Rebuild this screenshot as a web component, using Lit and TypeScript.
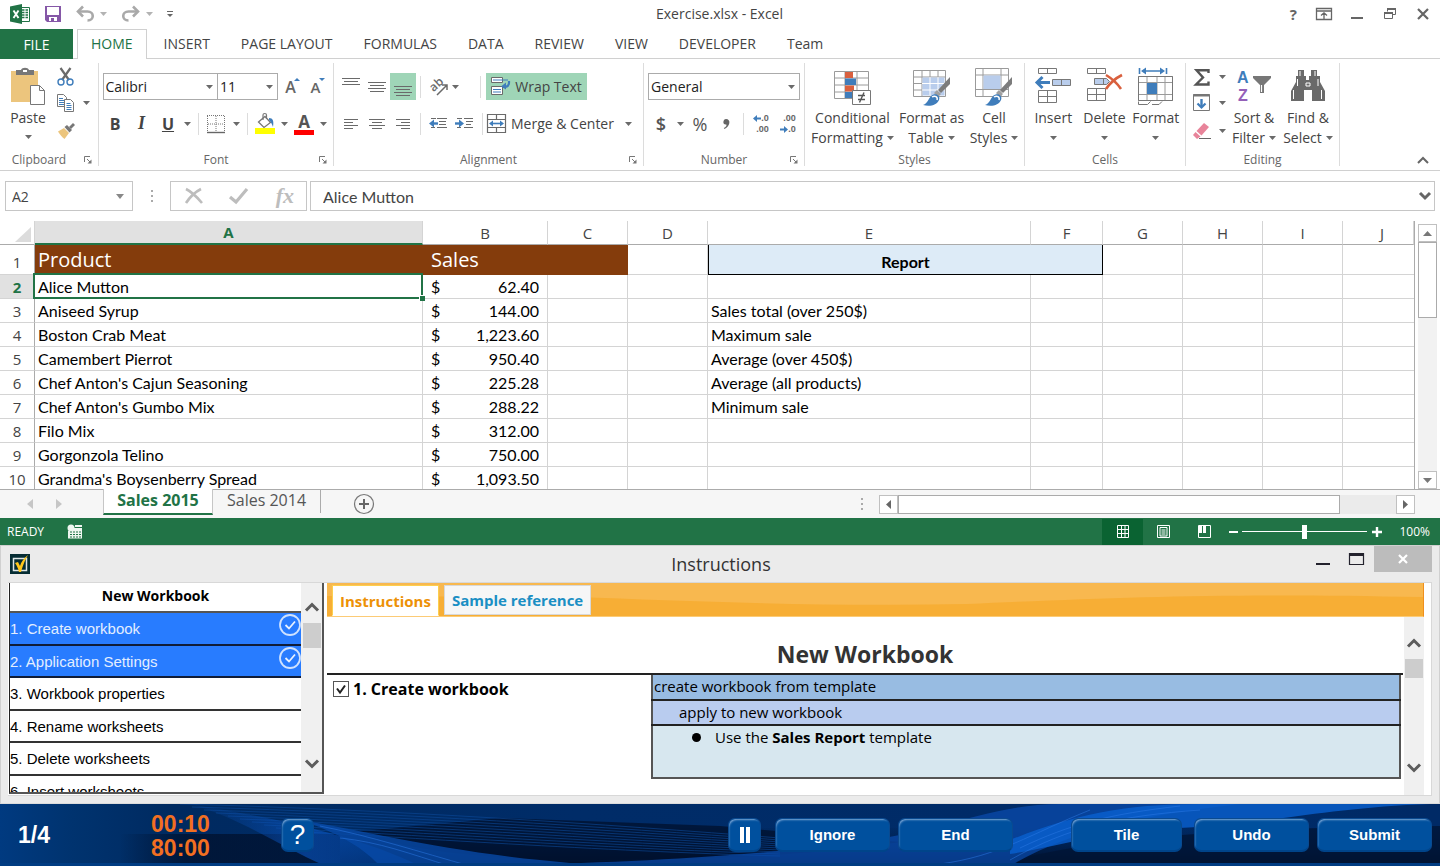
import { LitElement, html, svg, css, nothing } from "lit";
import { customElement } from "lit/decorators.js";
import { classMap } from "lit/directives/class-map.js";

const BLUE = "#3f7dbb";

const ic = (w: number, h: number, body: unknown) =>
  html`<svg width=${w} height=${h} viewBox="0 0 ${w} ${h}" fill="none" aria-hidden="true">${body}</svg>`;

const down = ic(7, 4, svg`<path d="M0 0h7L3.5 4z" fill="#6a6a6a"/>`);
const lines = (rows: number[][]) =>
  svg`${rows.map(([x, y, w]) => svg`<path d="M${x} ${y + 0.5}h${w}" stroke="#6a6a6a"/>`)}`;
const chevron = (up: boolean) =>
  ic(16, 12, svg`<path d=${up ? "M2 9.500 8 3.500l6 6" : "M2 2.500l6 6 6-6"} stroke="#5c5c5c" stroke-width="3"/>`);

const brush = svg`
  <path d="M37 9v7l-9 9-3-3z" fill="#7c7c7c"/>
  <path d="M24 22l4 4-3 3-4-4z" fill="#a0a0a0"/>
  <path d="M10 37c5-2 5-6 8-9 4-4 10-1 8 4-2 5-9 7-16 5z" fill="${BLUE}"/>
  <path d="M19 29c3-2 6 0 5 3" stroke="#fff" stroke-width="1.500"/>`;

const I = {
  excel: ic(20, 20, svg`
    <path d="M10 3.500h9.500v14H10" fill="#fff" stroke="#217346"/>
    <path d="M12 6h2.500M15.500 6H18M12 8.500h2.500M15.500 8.500H18M12 11h2.500M15.500 11H18M12 13.500h2.500M15.500 13.500H18" stroke="#217346" stroke-width="1.400"/>
    <path d="M0 2.500 12 0v20L0 17.500z" fill="#217346"/>
    <path d="M3.500 6.500l5 7.500M8.500 6.500l-5 7.500" stroke="#fff" stroke-width="1.900"/>`),
  save: ic(16, 16, svg`
    <path d="M0 0h16v16H2l-2-2z" fill="#8557a7"/><path d="M2 1h12v8H2z" fill="#fff"/>
    <path d="M4 11h8v4H4z" fill="#fff"/><path d="M6 12h3v3H6z" fill="#8557a7"/>`),
  undo: ic(18, 16, svg`
    <path d="M2 5.500h9.500c7 0 7 9 0 9" stroke="#a9a9a9" stroke-width="2.600"/>
    <path d="M7 .5 2 5.500l5 5" stroke="#a9a9a9" stroke-width="2.600"/>`),
  redo: ic(18, 16, svg`
    <path d="M16 5.500H6.500c-7 0-7 9 0 9" stroke="#a9a9a9" stroke-width="2.600"/>
    <path d="M11 .5l5 5-5 5" stroke="#a9a9a9" stroke-width="2.600"/>`),
  more: ic(6, 6, svg`<path d="M0 .5h6" stroke="#666"/><path d="M0 3h6L3 6z" fill="#666"/>`),
  ribbonOpt: ic(16, 12, svg`
    <path d="M.5.5h15v11H.5zM.5 3h15M8 11V5M5 7.500 8 4.800l3 2.700" stroke="#666" stroke-width="1.300"/>`),
  min: ic(12, 12, svg`<path d="M0 10h12" stroke="#666" stroke-width="2"/>`),
  restore: ic(12, 12, svg`
    <path d="M3.500 3.500v-3h8v6h-3M.5 4.500h8v6h-8z" stroke="#666"/><path d="M3 1h9M0 5h9" stroke="#666" stroke-width="2"/>`),
  close: ic(12, 12, svg`<path d="M1 1l10 10M11 1 1 11" stroke="#666" stroke-width="2.200"/>`),
  paste: ic(36, 38, svg`
    <path d="M1 3h27v31H1z" fill="#ecc57d"/>
    <path d="M6 2h5c1-3 7-3 8 0h5v5H6z" fill="#777"/><path d="M13 2h4v2h-4z" fill="#fff"/>
    <path d="M20.500 17.500h9l5 5v14h-14z" fill="#fff" stroke="#777"/><path d="M29.500 17.500v5h5" stroke="#777"/>`),
  cut: ic(18, 18, svg`
    <path d="M3.500 0 12 12M13.500 0 5 12" stroke="#6a6a6a" stroke-width="2.200"/>
    <circle cx="4" cy="14" r="3" stroke="${BLUE}" stroke-width="1.400"/><circle cx="13" cy="14" r="3" stroke="${BLUE}" stroke-width="1.400"/>`),
  copy: ic(18, 18, svg`
    <path d="M.5.5h6l3 3v9h-9z" fill="#fff" stroke="#777"/>
    <path d="M2 4.500h4M2 6.500h5M2 8.500h5M2 10.500h5" stroke="${BLUE}"/>
    <path d="M7.500 5.500h6l3 3v9h-9z" fill="#fff" stroke="#777"/>
    <path d="M9.500 9.500h4M9.500 11.500h5M9.500 13.500h5M9.500 15.500h5" stroke="${BLUE}"/>`),
  painter: ic(18, 16, svg`
    <path d="M1 8.500 7 5l5 5-4.500 6C5 14 3 12 1 8.500z" fill="#ecc57d"/>
    <path d="M7.500 4 10 2l5 5-2.500 2.500z" fill="#777"/><path d="M12 4l4-4 2 2-4 4z" fill="#777"/>`),
  launcher: ic(8, 8, svg`<path d="M.5 6V.5H6" stroke="#777"/><path d="M3 3l4 4" stroke="#777"/><path d="M7.500 3.500v4h-4z" fill="#777"/>`),
  grow: ic(6, 3, svg`<path d="M0 3l3-3 3 3z" fill="${BLUE}"/>`),
  shrink: ic(6, 3, svg`<path d="M0 0l3 3 3-3z" fill="${BLUE}"/>`),
  borders: ic(18, 18, svg`
    <path d="M.5 1v16M17 .5H0M17.500 1v16M9 1v16M1 9h16" stroke="#777" stroke-dasharray="1 1"/>
    <path d="M0 17.500h18" stroke="#666" stroke-width="1.400"/>`),
  fill: ic(20, 21, svg`
    <path d="M0 15h20v6H0z" fill="#ffff00"/>
    <path d="M3.500 9 10 3.500l5.500 6L9 14.500z" fill="#fff" stroke="#777" stroke-width="1.300"/>
    <path d="M8 7V2c0-2 3.500-2 3.500 0v4" stroke="#777" stroke-width="1.200"/>
    <path d="M14 5c4 0 5 3 4 9-1-3-2-5-4-7z" fill="${BLUE}"/>`),
  fontColor: ic(20, 5, svg`<path d="M0 0h20v5H0z" fill="#ff0000"/>`),
  top: ic(18, 18, lines([[0, 0, 18], [2, 3, 14], [0, 6, 18]])),
  middle: ic(18, 18, lines([[0, 4, 18], [2, 7, 14], [0, 10, 18], [2, 13, 14]])),
  bottom: ic(18, 18, lines([[0, 8, 18], [2, 11, 14], [0, 14, 18], [2, 17, 14]])),
  left: ic(14, 12, lines([[0, 1, 14], [0, 4, 9], [0, 7, 14], [0, 10, 9]])),
  center: ic(16, 12, lines([[0, 1, 16], [3, 4, 10], [0, 7, 16], [3, 10, 10]])),
  right: ic(14, 12, lines([[0, 1, 14], [5, 4, 9], [0, 7, 14], [5, 10, 9]])),
  orient: ic(22, 20, svg`
    <text x="3" y="12" transform="rotate(-42 9 9)" font-family="Open Sans, sans-serif" font-size="12" font-weight="600" fill="#6a6a6a">ab</text>
    <path d="M10 18 20 8M15 8h5v5" stroke="#6a6a6a" stroke-width="1.500"/>`),
  wrap: ic(19, 19, svg`
    <path d="M.5.5h11v5H.5zM.5 9.500h11v8H.5z" fill="#fff" stroke="#6a6a6a"/>
    <path d="M2 3h15M2 12.500h8M2 15h8" stroke="${BLUE}"/><path d="M18 4v2c0 3-2 4-6 4" stroke="${BLUE}" stroke-width="2.200"/>
    <path d="M10 9.500l5-4v7z" fill="${BLUE}"/>`),
  merge: ic(19, 19, svg`
    <path d="M.5.5h18v18H.5zM.5 5.500h18M.5 13.500h18M9.500.5v5M9.500 13.500v5" fill="#fff" stroke="#6a6a6a" stroke-width="1.200"/>
    <path d="M4 9.500h11" stroke="${BLUE}" stroke-width="1.600"/><path d="M2 9.500 6 6.500v6zM17 9.500l-4-3v6z" fill="${BLUE}"/>`),
  outdent: ic(18, 13, svg`${lines([[8, 1, 10], [10, 4, 7], [10, 7, 7], [2, 10, 4], [8, 10, 10], [2, 1, 5]])}
    <path d="M3 6.500h6" stroke="${BLUE}" stroke-width="2.400"/><path d="M0 6.500 5 2.500v8z" fill="${BLUE}"/>`),
  indent: ic(18, 13, svg`${lines([[9, 1, 9], [11, 4, 7], [11, 7, 5], [2, 10, 4], [9, 10, 9], [2, 1, 5]])}
    <path d="M0 6.500h6" stroke="${BLUE}" stroke-width="2.400"/><path d="M9 6.500l-5-4v8z" fill="${BLUE}"/>`),
  arrL: ic(8, 7, svg`<path d="M2 3.500h6" stroke="${BLUE}" stroke-width="2"/><path d="M0 3.500 4 0v7z" fill="${BLUE}"/>`),
  arrR: ic(8, 7, svg`<path d="M0 3.500h6" stroke="${BLUE}" stroke-width="2"/><path d="M8 3.500 4 0v7z" fill="${BLUE}"/>`),
  comma: ic(7, 10, svg`<path d="M3 0c5 0 4.500 7-1.500 10l-.7-1C3 8 4 6.500 3.300 5.500-1 6 0 0 3 0z" fill="#666"/>`),
  cond: ic(38, 38, svg`
    <path d="M.5 3.500h34v27H.5zM.5 10h34M.5 17h34M.5 24h34M11 3.500v27M23 3.500v27" fill="#fff" stroke="#9a9a9a"/>
    <path d="M11 4h8v6h-8zM11 17.500h9v6h-9z" fill="#d9603e"/><path d="M11 10.500h11v6.500H11zM11 24h7v6h-7z" fill="${BLUE}"/>
    <path d="M18.500 22.500h18v14h-18z" fill="#fff" stroke="#777"/>
    <path d="M24 27.500h7M24 31.500h7M30 24.500l-4.500 10" stroke="#555" stroke-width="1.400"/>`),
  fmtTable: ic(38, 38, svg`
    <path d="M.5 2.500h32v26H.5zM.5 9h32M.5 15.500h32M.5 22h32M9 2.500v26M17 2.500v26M25 2.500v26" fill="#fff" stroke="#9a9a9a"/>
    <path d="M9.500 9.500h22v18h-22z" fill="#b9cdec"/><path d="M9 15.500h23M9 22h23M17 9v19M25 9v19" stroke="#fff"/>${brush}`),
  cellStyles: ic(38, 38, svg`
    <path d="M.5.5h33v28H.5zM.5 7h33M.5 21.500h33M8 .5v28M26 .5v28" fill="#fff" stroke="#9a9a9a"/>
    <path d="M8.500 7.500h17v13.500h-17z" fill="#b9cdec"/>${brush}`),
  insert: ic(36, 38, svg`
    <path d="M3.500 .5h18v5h-18zM12.500 .5v5M3.500 22.500h18v12h-18zM3.500 28.500h18M12.500 22.500v12" fill="#fff" stroke="#777"/>
    <path d="M17.500 11.500h18v6h-18zM26.500 11.500v6" fill="#b9cdec" stroke="#777"/>
    <path d="M3 14.500h12" stroke="${BLUE}" stroke-width="3"/><path d="M7.500 9 2 14.500l5.500 5.500" stroke="${BLUE}" stroke-width="3"/>`),
  del: ic(36, 38, svg`
    <path d="M.5 .5h18v5H.5zM9.500 .5v5M.5 20.500h18v12H.5zM.5 26.500h18M9.500 20.500v12" fill="#fff" stroke="#777"/>
    <path d="M7.500 10.500h12l3 3-3 3h-12zM16.500 10.500v6" fill="#b9cdec" stroke="#777"/>
    <path d="M19 7c5 3 11 8 15 14M35 7c-6 3-12 8-16 14" stroke="#d9603e" stroke-width="2.600"/>`),
  format: ic(36, 38, svg`
    <path d="M1.500 0v6M28.500 0v6M6 3h18" stroke="${BLUE}" stroke-width="1.600"/><path d="M3 3l5-3.500v7zM27 3l-5-3.500v7z" fill="${BLUE}"/>
    <path d="M.5 8.500h34v24H.5zM.5 14.500h34M.5 26.500h34M9 8.500v24M19 8.500v24M27 8.500v24" fill="#fff" stroke="#9a9a9a"/>
    <path d="M.5 33.500v3h9l3-3M14 36.500h7l3-3" stroke="#777"/><path d="M9 15h10v11H9z" fill="${BLUE}"/><path d="M.5 8.500h34v24H.5z" stroke="#777"/>`),
  sum: ic(16, 17, svg`<path d="M14.500 4V1.200H2.500L9 8.500 2 15.500h12.500v-3" stroke="#555" stroke-width="2.400"/>`),
  fillDown: ic(18, 18, svg`<path d="M.5.5h16v16H.5z" fill="#fff" stroke="#777"/><path d="M0 1.500h17" stroke="#777" stroke-width="2"/>
    <path d="M8.500 5v8" stroke="${BLUE}" stroke-width="2.400"/><path d="M4.500 9.500l4 4 4-4" stroke="${BLUE}" stroke-width="2.200"/>`),
  eraser: ic(18, 18, svg`<path d="M3.500 9 11 1l5 4-7.500 8.500z" fill="#e8849a"/><path d="M2.500 10 0 13l4 4 3.500-2.500z" fill="#e8849a"/><path d="M6 16.500h12" stroke="#666"/>`),
  sort: ic(36, 38, svg`
    <text x="1" y="15" font-family="Liberation Sans, sans-serif" font-size="16" font-weight="700" fill="${BLUE}">A</text>
    <text x="2" y="33" font-family="Liberation Sans, sans-serif" font-size="16" font-weight="700" fill="#9460b8">Z</text>
    <path d="M17 8h18v2l-7 7v8h-4v-8l-7-7z" fill="#777"/><path d="M25.500 17v7" stroke="#fff" stroke-width="1.200"/>`),
  find: ic(36, 38, svg`
    <path d="M8 2h6v6h2v4h3V8h2V2h6v6h3v6l5 9v10H22V22h-8v11H1V23l5-9V8h2z" fill="#6a6a6a"/>
    <path d="M10 3v5M25 3v5M7.500 11v7M28 11v7M3.500 22v9M31.500 22v9" stroke="#fff"/><path d="M16 15h4v3h-4z" stroke="#fff"/>`),
  collapse: ic(12, 8, svg`<path d="M1 7l5-5 5 5" stroke="#666" stroke-width="2"/>`),
  cancel: ic(18, 16, svg`<path d="M1 1c6 3 11 8 16 14M16 1C10 4 5 9 1 15" stroke="#bdbdbd" stroke-width="2.600"/>`),
  enter: ic(20, 16, svg`<path d="M1 9l6 5L18 1" stroke="#bdbdbd" stroke-width="3.200"/>`),
  plus: ic(22, 22, svg`<circle cx="11" cy="11" r="9.500" stroke="#777" stroke-width="1.200"/><path d="M11 6v10M6 11h10" stroke="#666" stroke-width="2"/>`),
  macro: ic(16, 15, svg`<path d="M3 4h12v10.500H1V7h2z" fill="#eef6f0"/><circle cx="4" cy="4" r="3.500" fill="#eef6f0"/><path d="M8 1h7v2H8z" fill="#eef6f0"/>
    <path d="M3 8h11M3 10.500h11M3 13h11" stroke="#217346" stroke-dasharray="2 1"/>`),
  normal: ic(12, 13, svg`<path d="M.5.500h11v12H.5zM.5 4.500h11M.5 8.500h11M4.500.500v12M8 .500v12" stroke="#fff"/>`),
  layout: ic(13, 13, svg`<path d="M.5.500h12v12H.5zM3 2.500h7v8.500H3z" stroke="#fff"/><path d="M4.500 5h4M4.500 7h4M4.500 9h4" stroke="#fff"/>`),
  breaks: ic(13, 13, svg`<path d="M.5.500h12v12H.5z" stroke="#fff"/><path d="M1 0h3v8H1zM5 0h3v8H5z" fill="#fff"/>`),
  app: ic(20, 20, svg`<path d="M0 0h20v20H0z" fill="#062c33"/><path d="M3.500 4.500h13v12h-13z" stroke="#dfe6e6" stroke-width="1.500"/>
    <path d="M5 9l3-1 2 4c1-4 4-8 8-11-3 5-5 10-7 17H9c-1-4-2-6-4-9z" fill="#ffc61a"/>`),
  minDark: ic(14, 12, svg`<path d="M0 11h14" stroke="#23222d" stroke-width="2"/>`),
  maxDark: ic(15, 12, svg`<path d="M.5.500h14v11H.5z" stroke="#23222d" stroke-width="1.200"/><path d="M0 1.500h15" stroke="#23222d" stroke-width="3"/>`),
  closeWhite: ic(10, 10, svg`<path d="M1 1l8 8M9 1 1 9" stroke="#fff" stroke-width="2.200"/>`),
  tick: ic(22, 24, svg`<circle cx="11" cy="12" r="10" stroke="#cfe2ff" stroke-width="1.800"/><path d="M6.500 12l3.500 3.500 6-7" stroke="#e8f1ff" stroke-width="1.800"/>`),
};

const base = css`
  :host { display: block; box-sizing: border-box; font-family: "Open Sans", "Noto Sans", sans-serif; color: #444; }
  *, *::before, *::after { box-sizing: border-box; }
  button { font: inherit; color: inherit; background: none; border: 0; padding: 0; margin: 0; display: inline-flex; align-items: center; justify-content: center; }
  svg { display: block; flex: none; overflow: visible; }
`;

@customElement("xl-titlebar")
class XlTitlebar extends LitElement {
  static styles = [base, css`
    .bar { display: grid; grid-template-columns: 1fr auto 1fr; align-items: center; height: 29px; padding: 0 11px 2px 10px; }
    .quick, .window { display: flex; align-items: center; }
    .quick .gap { margin-left: 15px; }
    .quick .arrow { margin-left: 6px; opacity: 0.5; }
    .quick .wide { margin-left: 14px; }
    .window { justify-content: flex-end; gap: 21px; }
    .window .opt { margin: 0 -2px; }
    .help { font-size: 15px; font-weight: 700; color: #666; }
    .title { font-size: 14px; }
    .tabs { display: flex; gap: 3px; height: 30px; border-bottom: 1px solid #d0d0d0; }
    .tab, .file { font-size: 14px; height: 30px; padding: 0 13px 2px; border: 1px solid transparent; border-bottom: 0; }
    .file { width: 73px; background: #217346; color: #fff; margin-right: 1px; border: 0; padding: 0; }
    .current { color: #217346; background: #fff; border-color: #d0d0d0; }
  `];
  render() {
    const tabs = ["HOME", "INSERT", "PAGE LAYOUT", "FORMULAS", "DATA", "REVIEW", "VIEW", "DEVELOPER", "Team"];
    return html`
      <header class="bar">
        <div class="quick">
          ${I.excel}
          <button class="gap" aria-label="Save">${I.save}</button>
          <button class="gap" aria-label="Undo">${I.undo}</button><span class="arrow">${down}</span>
          <button class="gap" aria-label="Redo">${I.redo}</button><span class="arrow">${down}</span>
          <button class="wide" aria-label="Customize toolbar">${I.more}</button>
        </div>
        <div class="title">Exercise.xlsx - Excel</div>
        <div class="window">
          <button class="help" aria-label="Help">?</button>
          <button class="opt" aria-label="Ribbon options">${I.ribbonOpt}</button>
          <button aria-label="Minimize">${I.min}</button>
          <button aria-label="Restore">${I.restore}</button>
          <button aria-label="Close">${I.close}</button>
        </div>
      </header>
      <nav class="tabs">
        <button class="file">FILE</button>
        ${tabs.map((t, i) => html`<button class=${classMap({ tab: true, current: i === 0 })}>${t}</button>`)}
      </nav>`;
  }
}

@customElement("xl-ribbon")
class XlRibbon extends LitElement {
  static styles = [base, css`
    .ribbon { display: flex; height: 112px; padding-top: 4px; border-bottom: 1px solid #d0d0d0; }
    .group { display: flex; flex-direction: column; height: 103px; border-right: 1px solid #dcdcdc; }
    .body { flex: 1; display: flex; padding-top: 5px; }
    .rows { display: flex; flex-direction: column; }
    .name { display: grid; grid-template-columns: 20px 1fr 20px; height: 12px; font-size: 12px; line-height: 12px; color: #666; text-align: center; align-items: center; }
    .row { display: grid; height: 37px; align-items: center; justify-items: center; }
    .clipboard { width: 99px; }
    .clipboard .name { grid-template-columns: 1fr 20px; }
    .font { width: 235px; }
    .alignment { width: 310px; }
    .number { width: 161px; }
    .styles { width: 220px; }
    .cells { width: 161px; }
    .editing { width: 154px; }
    .clipboard .body { display: grid; grid-template-columns: 56px 20px 20px; }
    .small { display: grid; grid-template-rows: 18px 34px 22px; place-items: center; align-content: start; }
    .paste { flex-direction: column; justify-content: flex-start; gap: 3px; font-size: 14px; line-height: 18px; }
    .paste .drop { margin-top: 5px; }
    .font-a { grid-template-columns: 114px 61px 25px 25px; padding-left: 4px; }
    .font-b { grid-template-columns: 26px 27px 26px 12px 10px 26px 14px 9px 26px 12px 28px 10px; padding-left: 3px; }
    .align-a { grid-template-columns: 26px 26px 26px 9px 26px 8px 27px 101px; padding-left: 4px; }
    .align-b { grid-template-columns: 26px 26px 26px 9px 26px 26px 10px auto 30px; padding-left: 4px; justify-content: start; }
    .num-a { grid-template-columns: 152px; padding-left: 4px; }
    .num-b { grid-template-columns: 26px 12px 28px 24px 10px 26px 28px; padding-left: 4px; }
    .big { flex-direction: column; justify-content: flex-start; font-size: 14px; line-height: 20px; white-space: nowrap; gap: 2px; color: #444; }
    .big .line { display: flex; align-items: center; justify-content: center; gap: 4px; height: 20px; }
    .styles .body { display: grid; grid-template-columns: 95px 63px 62px; }
    .cells .body { display: grid; grid-template-columns: 1fr 50px 1fr; padding: 5px 3px 0 2px; }
    .editing .body { display: grid; grid-template-columns: 32px 8px 56px 52px; }
    .select { position: relative; }
    .select svg { position: absolute; right: 5px; top: 12px; pointer-events: none; }
    select { appearance: none; display: block; height: 27px; border: 1px solid #ababab; background: #fff; color: #222; font: 14px "Open Sans", "Noto Sans", sans-serif; padding: 0 0 0 2px; border-radius: 0; width: 100%; }
    .w-font { width: 115px; } .w-size { width: 61px; } .w-num { width: 152px; }
    .bar { width: 1px; height: 22px; background: #dcdcdc; }
    .bar.end { justify-self: end; margin-right: 5px; }
    .on { background: #9fd5b7; height: 27px; width: 100%; }
    .text { font-size: 14px; gap: 5px; white-space: nowrap; }
    .glyph { font-size: 16px; font-weight: 700; }
    .serif { font-family: "Liberation Serif", serif; font-style: italic; font-size: 18px; }
    .under { text-decoration: underline; }
    .letter { position: relative; width: 20px; height: 20px; font-size: 16px; font-weight: 600; color: #666; }
    .letter.smaller { font-size: 15px; }
    .letter svg { position: absolute; right: 1px; top: 1px; }
    .color { flex-direction: column; font-size: 17px; line-height: 17px; font-weight: 700; color: #555; }
    .money { font-size: 18px; color: #555; font-weight: 600; }
    .pct { font-size: 18px; color: #555; }
    .dec { display: grid; font: 700 9px/11px "Liberation Sans", sans-serif; color: #666; justify-items: end; }
    .dec span { display: flex; align-items: center; }
    .fold { flex: 1; display: flex; align-items: flex-end; justify-content: flex-end; padding: 0 11px 6px 0; }
  `];
  group(cls: string, label: string, launcher: boolean, body: unknown) {
    return html`<section class="group ${cls}">
      <div class="body">${body}</div>
      <div class="name">
        ${cls === "clipboard" ? nothing : html`<span></span>`}
        <span>${label}</span>
        ${launcher ? html`<button aria-label="${label} settings">${I.launcher}</button>` : html`<span></span>`}
      </div>
    </section>`;
  }
  big(icon: unknown, a: string, b = "") {
    return html`<button class="big">${icon}
      <span><span class="line">${a}</span><span class="line">${b}${down}</span></span></button>`;
  }
  render() {
    return html`<div class="ribbon">
      ${this.group("clipboard", "Clipboard", true, html`
        <button class="paste">${I.paste}<span>Paste</span><span class="drop">${down}</span></button>
        <div class="small">
          <button aria-label="Cut">${I.cut}</button><button aria-label="Copy">${I.copy}</button><button aria-label="Format painter">${I.painter}</button>
        </div>
        <div class="small"><span></span><button aria-label="Copy options">${down}</button></div>`)}
      ${this.group("font", "Font", true, html`<div class="rows">
        <div class="row font-a">
          <label class="select w-font"><select aria-label="Font"><option>Calibri</option></select>${down}</label>
          <label class="select w-size"><select aria-label="Font size"><option>11</option></select>${down}</label>
          <button class="letter" aria-label="Grow font">A${I.grow}</button>
          <button class="letter smaller" aria-label="Shrink font">A${I.shrink}</button>
        </div>
        <div class="row font-b">
          <button class="glyph">B</button><button class="glyph serif">I</button><button class="glyph under">U</button>
          <button aria-label="Underline options">${down}</button><span class="bar"></span>
          <button aria-label="Borders">${I.borders}</button><button aria-label="Border options">${down}</button><span class="bar"></span>
          <button aria-label="Fill color">${I.fill}</button><button aria-label="Fill options">${down}</button>
          <button class="color" aria-label="Font color">A${I.fontColor}</button><button aria-label="Font color options">${down}</button>
        </div></div>`)}
      ${this.group("alignment", "Alignment", true, html`<div class="rows">
        <div class="row align-a">
          <button aria-label="Top align">${I.top}</button><button aria-label="Middle align">${I.middle}</button>
          <button class="on" aria-label="Bottom align">${I.bottom}</button><span class="bar"></span>
          <button aria-label="Orientation">${I.orient}</button><button aria-label="Orientation options">${down}</button>
          <span class="bar end"></span><button class="on text">${I.wrap}Wrap Text</button>
        </div>
        <div class="row align-b">
          <button aria-label="Align left">${I.left}</button><button aria-label="Center">${I.center}</button>
          <button aria-label="Align right">${I.right}</button><span class="bar"></span>
          <button aria-label="Decrease indent">${I.outdent}</button><button aria-label="Increase indent">${I.indent}</button>
          <span class="bar"></span><button class="text">${I.merge}Merge &amp; Center</button>
          <button aria-label="Merge options">${down}</button>
        </div></div>`)}
      ${this.group("number", "Number", true, html`<div class="rows">
        <div class="row num-a"><label class="select w-num"><select aria-label="Number format"><option>General</option></select>${down}</label></div>
        <div class="row num-b">
          <button class="money">$</button><button aria-label="Currency options">${down}</button>
          <button class="pct">%</button><button aria-label="Comma style">${I.comma}</button><span class="bar"></span>
          <button class="dec" aria-label="Increase decimal"><span>${I.arrL}.0</span><span>.00</span></button>
          <button class="dec" aria-label="Decrease decimal"><span>.00</span><span>${I.arrR}.0</span></button>
        </div></div>`)}
      ${this.group("styles", "Styles", false, html`
        ${this.big(I.cond, "Conditional", "Formatting")}
        ${this.big(I.fmtTable, "Format as", "Table")}
        ${this.big(I.cellStyles, "Cell", "Styles")}`)}
      ${this.group("cells", "Cells", false, html`
        ${this.big(I.insert, "Insert")}${this.big(I.del, "Delete")}${this.big(I.format, "Format")}`)}
      ${this.group("editing", "Editing", false, html`
        <div class="small"><button aria-label="Sum">${I.sum}</button><button aria-label="Fill">${I.fillDown}</button><button aria-label="Clear">${I.eraser}</button></div>
        <div class="small"><button aria-label="Sum options">${down}</button><button aria-label="Fill options">${down}</button><button aria-label="Clear options">${down}</button></div>
        ${this.big(I.sort, "Sort &", "Filter")}
        ${this.big(I.find, "Find &", "Select")}`)}
      <div class="fold"><button aria-label="Collapse ribbon">${I.collapse}</button></div>
    </div>`;
  }
}

@customElement("xl-formula-bar")
class XlFormulaBar extends LitElement {
  static styles = [base, css`
    .bar { display: flex; align-items: center; padding: 0 5px; height: 50px; }
    .box { height: 30px; border: 1px solid #c6c6c6; display: flex; align-items: center; }
    .name { width: 128px; padding-right: 8px; }
    input { border: 0; outline: 0; padding: 0; background: none; font: 14px "Open Sans", "Noto Sans", sans-serif; color: #444; min-width: 0; flex: 1; }
    .name input { padding-left: 6px; }
    .dots { width: 37px; display: flex; justify-content: center; }
    .tools { width: 137px; justify-content: space-between; padding: 0 12px 0 14px; }
    .fx { font: italic bold 22px "Liberation Serif", serif; color: #bdbdbd; }
    .value { flex: 1; margin-left: 3px; padding: 0 3px 0 12px; }
    .value input { font-family: Lato, sans-serif; font-size: 16px; }
  `];
  render() {
    return html`<div class="bar">
      <div class="box name"><input aria-label="Name box" value="A2" />${ic(8, 5, svg`<path d="M0 0h8L4 5z" fill="#888"/>`)}</div>
      <div class="dots">${ic(2, 12, svg`<path d="M0 0h2v2H0zM0 5h2v2H0zM0 10h2v2H0z" fill="#aaa"/>`)}</div>
      <div class="box tools"><button aria-label="Cancel">${I.cancel}</button><button aria-label="Enter">${I.enter}</button><button class="fx">fx</button></div>
      <div class="box value"><input aria-label="Formula" value="Alice Mutton" /><button aria-label="Expand formula bar">${ic(12, 8, svg`<path d="M1 1l5 5 5-5" stroke="#666" stroke-width="3"/>`)}</button></div>
    </div>`;
  }
}

const products: [string, string][] = [
  ["Alice Mutton", "62.40"], ["Aniseed Syrup", "144.00"], ["Boston Crab Meat", "1,223.60"],
  ["Camembert Pierrot", "950.40"], ["Chef Anton's Cajun Seasoning", "225.28"], ["Chef Anton's Gumbo Mix", "288.22"],
  ["Filo Mix", "312.00"], ["Gorgonzola Telino", "750.00"], ["Grandma's Boysenberry Spread", "1,093.50"],
];
const report = ["", "Sales total (over 250$)", "Maximum sale", "Average (over 450$)", "Average (all products)", "Minimum sale", "", "", ""];

@customElement("xl-sheet")
class XlSheet extends LitElement {
  static styles = [base, css`
    :host { flex: 1; min-height: 0; display: flex; flex-direction: column; }
    .area { flex: 1; min-height: 0; display: grid; grid-template-columns: 1fr 25px; }
    .view { overflow: hidden; border-right: 1px solid #ababab; }
    table { width: 100%; table-layout: fixed; border-collapse: separate; border-spacing: 0; font: 16px Lato, sans-serif; color: #000; }
    .c-head { width: 35px; } .c-a { width: 388px; } .c-b { width: 125px; } .c-e { width: 323px; } .c-f { width: 72px; } .c-std { width: 80px; }
    th, td { padding: 0; white-space: nowrap; border-right: 1px solid #d4d4d4; border-bottom: 1px solid #d4d4d4; height: 24px; line-height: 22px; overflow: hidden; }
    thead th { font: 15px/22px "Open Sans", sans-serif; color: #444; border-bottom-color: #ababab; }
    thead th.sel { background: #e1e1e1; color: #217346; font-weight: 700; border-bottom: 2px solid #217346; }
    thead th:last-child { padding-left: 8px; }
    .corner svg { margin: 3px 0 0 15px; }
    tbody th { font: 15px/22px "Open Sans", sans-serif; color: #444; border-right-color: #ababab; }
    tbody th.sel { background: #e1e1e1; color: #217346; font-weight: 700; }
    .first td, .first th { height: 30px; padding-top: 4px; }
    td { padding: 0 3px; }
    td:last-child { border-right: 0; }
    .first .brown { background: #843c0c; color: #fff; font: 20px/24px "Open Sans", sans-serif; border-color: #843c0c; padding-top: 0; }
    .first .b { padding-left: 8px; }
    .report { background: #ddebf7; font-weight: 700; text-align: center; border: 1px solid #000; border-top: 0; }
    .active { position: relative; overflow: visible; }
    .active::after { content: ""; position: absolute; inset: -2px -1px -1px -2px; border: 2px solid #217346; pointer-events: none; }
    .active::before { content: ""; position: absolute; right: -3px; bottom: -3px; width: 6px; height: 6px; background: #217346; border: 1px solid #fff; border-width: 1px 0 0 1px; z-index: 1; }
    .money { display: flex; justify-content: space-between; padding: 0 5px; }
    .scroll { display: grid; grid-template-rows: 18px 76px 1fr 18px; width: 19px; margin: 3px 0 0 3px; background: #f2f2f2; }
    .scroll button, .thumb { border: 1px solid #c0c0c0; background: #fff; }
    .thumb { border-color: #ababab; }
    .foot { display: flex; align-items: center; height: 29px; background: #f6f6f6; border-top: 1px solid #ababab; padding-right: 25px; font-size: 16px; }
    .nav { display: flex; gap: 23px; width: 103px; padding-left: 27px; }
    .tab { align-self: flex-start; height: 25px; color: #555; line-height: 20px; padding-bottom: 3px; margin-top: -1px; }
    .tab.current { width: 110px; background: #fff; color: #217346; font-weight: 700; border: 1px solid #c6c6c6; border-top: 0; border-bottom: 2px solid #217346; height: 26px; }
    .tab.next { width: 108px; border-right: 1px solid #ababab; height: 24px; }
    .new { margin-left: 32px; }
    .dots { margin-left: auto; margin-right: 16px; }
    .hscroll { display: grid; grid-template-columns: 19px 442px 1fr 19px; width: 536px; height: 19px; background: #ebebeb; }
    .hscroll button, .hthumb { border: 1px solid #c0c0c0; background: #fff; }
    .hthumb { border-color: #ababab; }
  `];
  render() {
    const cols = ["A", "B", "C", "D", "E", "F", "G", "H", "I", "J"];
    return html`
      <div class="area">
        <div class="view"><table>
          <colgroup><col class="c-head" /><col class="c-a" /><col class="c-b" /><col class="c-std" /><col class="c-std" /><col class="c-e" /><col class="c-f" /><col class="c-std" /><col class="c-std" /><col class="c-std" /><col /></colgroup>
          <thead><tr><th class="corner">${ic(16, 15, svg`<path d="M16 0v15H0z" fill="#dcdcdc"/>`)}</th>
            ${cols.map((c, i) => html`<th class=${classMap({ sel: i === 0 })}>${c}</th>`)}</tr></thead>
          <tbody>
            <tr class="first"><th>1</th><td class="brown">Product</td><td class="brown b">Sales</td><td class="brown"></td><td></td>
              <td class="report" colspan="2">Report</td><td></td><td></td><td></td><td></td></tr>
            ${products.map(([name, price], i) => html`<tr>
              <th class=${classMap({ sel: i === 0 })}>${i + 2}</th>
              <td class=${classMap({ active: i === 0 })}>${name}</td>
              <td><span class="money"><span>$</span><span>${price}</span></span></td>
              <td></td><td></td><td>${report[i]}</td><td></td><td></td><td></td><td></td><td></td></tr>`)}
          </tbody>
        </table></div>
        <div class="scroll">
          <button aria-label="Scroll up">${ic(9, 5, svg`<path d="M4.500 0 9 5H0z" fill="#777"/>`)}</button>
          <span class="thumb"></span><span></span>
          <button aria-label="Scroll down">${ic(9, 5, svg`<path d="M0 0h9L4.500 5z" fill="#777"/>`)}</button>
        </div>
      </div>
      <div class="foot">
        <div class="nav"><button aria-label="Previous sheet">${ic(6, 10, svg`<path d="M6 0v10L0 5z" fill="#c6c6c6"/>`)}</button>
          <button aria-label="Next sheet">${ic(6, 10, svg`<path d="M0 0v10l6-5z" fill="#c6c6c6"/>`)}</button></div>
        <button class="tab current">Sales 2015</button>
        <button class="tab next">Sales 2014</button>
        <button class="new" aria-label="New sheet">${I.plus}</button>
        <span class="dots">${ic(2, 12, svg`<path d="M0 0h2v2H0zM0 5h2v2H0zM0 10h2v2H0z" fill="#aaa"/>`)}</span>
        <div class="hscroll">
          <button aria-label="Scroll left">${ic(5, 9, svg`<path d="M5 0v9L0 4.500z" fill="#666"/>`)}</button><span class="hthumb"></span><span></span>
          <button aria-label="Scroll right">${ic(5, 9, svg`<path d="M0 0v9l5-4.500z" fill="#666"/>`)}</button>
        </div>
      </div>`;
  }
}

@customElement("xl-status")
class XlStatus extends LitElement {
  static styles = [base, css`
    .bar { display: flex; align-items: center; height: 27px; background: #217346; color: #fff; font-size: 12px; padding: 0 10px 0 7px; }
    .rec { margin-left: 23px; }
    .views { display: flex; margin-left: auto; height: 26px; }
    .views button { width: 41px; }
    .views .on { background: #0a6332; }
    .zoom { display: flex; align-items: center; gap: 4px; margin-left: 4px; }
    .zoom input { appearance: none; width: 125px; height: 15px; margin: 0; background: linear-gradient(#fff, #fff) center / 100% 1px no-repeat; }
    .zoom input::-webkit-slider-thumb { appearance: none; width: 5px; height: 14px; background: #fff; }
    .pct { margin-left: 16px; }
  `];
  render() {
    return html`<footer class="bar">
      <span>READY</span><button class="rec" aria-label="Record macro">${I.macro}</button>
      <div class="views"><button class="on" aria-label="Normal view">${I.normal}</button><button aria-label="Page layout view">${I.layout}</button><button aria-label="Page break view">${I.breaks}</button></div>
      <div class="zoom"><button aria-label="Zoom out">${ic(9, 2, svg`<path d="M0 0h9v2H0z" fill="#fff"/>`)}</button>
        <input type="range" aria-label="Zoom" min="0" max="200" value="100" />
        <button aria-label="Zoom in">${ic(12, 12, svg`<path d="M6 1v10M1 6h10" stroke="#fff" stroke-width="2.400"/>`)}</button></div>
      <span class="pct">100%</span>
    </footer>`;
  }
}

@customElement("task-window")
class TaskWindow extends LitElement {
  static styles = [base, css`
    .win { background: #ebebeb; border: 1px solid #d0d0d0; border-bottom-color: #dcdcdc; height: 259px; padding: 0 7px 7px 7px; display: flex; flex-direction: column; }
    .head { display: grid; grid-template-columns: 1fr auto 1fr; height: 36px; align-items: center; font-size: 18px; color: #333; padding-left: 2px; }
    .controls { display: flex; justify-content: flex-end; align-self: start; align-items: center; gap: 19px; height: 26px; }
    .close { width: 58px; height: 26px; background: #bcbcbc; margin-left: -9px; }
    .main { flex: 1; min-height: 0; display: flex; background: #fff; border: 1px solid #d8d8d8; border-width: 1px 1px 1px 0; }
    .side { width: 315px; display: flex; border: 1px solid #222; border-top: 0; border-right: 2px solid #555; border-bottom: 2px solid #555; overflow: hidden; margin-left: 1px; margin-bottom: 1px; }
    .list { flex: 1; overflow: hidden; font: 15px "Liberation Sans", Arial, sans-serif; color: #000; }
    h2 { margin: 0; height: 30px; border-bottom: 2px solid #555; font: 700 14px/26px "Open Sans", sans-serif; text-align: center; color: #000; }
    ol { list-style: none; margin: 0; padding: 0; }
    li { display: flex; justify-content: space-between; height: 33px; line-height: 32px; border-bottom: 2px solid #333; }
    li:nth-child(even) { height: 32px; }
    li.done { background: #287cff; color: #e3eeff; border-bottom-color: #101c38; }
    .bar { width: 21px; background: #f0f0f0; display: grid; grid-template-rows: 40px 25px 1fr 34px; justify-items: center; }
    .bar .thumb, .docbar .thumb { width: 18px; background: #cdcdcd; }
    .up { align-self: end; margin-bottom: 10px; }
    .dn { align-self: start; }
    .doc { flex: 1; display: flex; flex-direction: column; margin: 0 7px 0 3px; min-width: 0; }
    .tabs { position: relative; display: flex; gap: 5px; height: 34px; padding: 2px 0 0 5px; background: #f7ae35; border-bottom: 1px solid #fccb76; border-right: 1px solid #ef8f1d; }
    .wave { position: absolute; inset: 0; width: 100%; height: 100%; }
    .tab { position: relative; height: 31px; background: #fff; border: 1px solid #fccf4f; border-bottom-color: #fff; font: 700 15px "Open Sans", sans-serif; color: #ed9106; padding: 0 7px; }
    .tab.other { color: #1b8fc4; background: #f6f6f6; border-color: #d8d8d8; height: 30px; }
    .scroller { flex: 1; display: flex; min-height: 0; }
    .page { flex: 1; min-width: 0; margin-right: 1px; overflow: hidden; }
    h1 { margin: 0; height: 58px; padding-top: 19px; text-align: center; font: 700 23px/36px "Open Sans", sans-serif; color: #333; border-bottom: 2px solid #222; }
    .task { display: flex; padding-right: 2px; }
    .step { width: 324px; display: flex; gap: 4px; padding-left: 6px; height: 28px; align-items: center; font: 700 16px "Open Sans", sans-serif; color: #000; }
    input { appearance: none; width: 16px; height: 16px; margin: 0; border: 1px solid #555; background: #fff; }
    .check { position: relative; display: flex; }
    .check svg { position: absolute; left: 2px; top: 2px; pointer-events: none; }
    .detail { flex: 1; border-collapse: collapse; border: 2px solid #555; border-top: 0; font: 15px "Open Sans", sans-serif; color: #000; }
    td { padding: 0 0 0 1px; height: 25px; line-height: 22px; border-bottom: 2px solid #222; vertical-align: top; }
    .l1 { background: #98bce2; } .l2 { background: #b9ccef; padding-left: 26px; }
    .l3 { background: #d7e7ef; height: 53px; border-bottom: 0; }
    .bullet { display: flex; align-items: center; padding-left: 38px; gap: 14px; }
    .docbar { width: 20px; background: #f0f0f0; display: grid; grid-template-rows: 42px 19px 1fr 33px; justify-items: center; }
  `];
  render() {
    const items = ["1. Create workbook", "2. Application Settings", "3. Workbook properties", "4. Rename worksheets", "5. Delete worksheets", "6. Insert worksheets"];
    return html`<section class="win">
      <header class="head">${I.app}<span>Instructions</span>
        <div class="controls"><button aria-label="Minimize">${I.minDark}</button><button aria-label="Maximize">${I.maxDark}</button><button class="close" aria-label="Close">${I.closeWhite}</button></div>
      </header>
      <div class="main">
        <aside class="side">
          <div class="list"><h2>New Workbook</h2><ol>
            ${items.map((t, i) => html`<li class=${classMap({ done: i < 2 })}><span>${t}</span>${i < 2 ? I.tick : nothing}</li>`)}</ol></div>
          <div class="bar"><button class="up" aria-label="Scroll up">${chevron(true)}</button><span class="thumb"></span><span></span><button class="dn" aria-label="Scroll down">${chevron(false)}</button></div>
        </aside>
        <div class="doc">
          <nav class="tabs">
            <svg class="wave" viewBox="0 0 1097 33" preserveAspectRatio="none" aria-hidden="true"><path d="M0 0h1097v14C900 10 800 14 640 21 500 24 360 18 250 14L0 13z" fill="#f8b84f"/></svg>
            <button class="tab">Instructions</button><button class="tab other">Sample reference</button>
          </nav>
          <div class="scroller">
            <div class="page">
              <h1>New Workbook</h1>
              <div class="task">
                <label class="step"><span class="check"><input type="checkbox" checked />${ic(12, 12, svg`<path d="M2 5.500l3 4 5-7" stroke="#222" stroke-width="2"/>`)}</span>1. Create workbook</label>
                <table class="detail"><tbody>
                  <tr><td class="l1">create workbook from template</td></tr>
                  <tr><td class="l2">apply to new workbook</td></tr>
                  <tr><td class="l3"><div class="bullet">${ic(9, 9, svg`<circle cx="4.500" cy="4.500" r="4.500" fill="#000"/>`)}<span>Use the <b>Sales Report</b> template</span></div></td></tr>
                </tbody></table>
              </div>
            </div>
            <div class="docbar"><button class="up" aria-label="Scroll up">${chevron(true)}</button><span class="thumb"></span><span></span><button class="dn" aria-label="Scroll down">${chevron(false)}</button></div>
          </div>
        </div>
      </div>
    </section>`;
  }
}

@customElement("exam-bar")
class ExamBar extends LitElement {
  static styles = [base, css`
    :host { font-family: "Liberation Sans", Arial, sans-serif; }
    .bar { position: relative; height: 62px; display: flex; align-items: center; padding: 0 8px 0 18px; background: #002a63; overflow: hidden; color: #fff; font-weight: 700; }
    .bg { position: absolute; inset: 0; width: 100%; height: 100%; overflow: hidden; }
    .bar > :not(.bg) { position: relative; }
    .count { width: 133px; font-size: 23px; }
    .time { color: #f26f21; font-size: 23px; line-height: 24px; width: 59px; padding-top: 1px; white-space: nowrap; display: flex; flex-direction: column; align-items: center; }
    button { height: 34px; width: 115px; border-radius: 7px; background: #00509e; border: 1px solid #0a4a90; border-bottom: 2px solid #00448a; box-shadow: inset 2px 3px 2px -2px #7ba7d6; font-size: 15px; color: #fff; }
    .help { width: 33px; margin-left: 71px; font-size: 28px; font-weight: 400; }
    .pause { width: 33px; margin-left: auto; }
    .set { display: flex; gap: 8px; }
    .left { margin-left: 14px; margin-right: 58px; }
    .tile { width: 111px; margin-right: 4px; }
  `];
  render() {
    return html`<div class="bar">
      <svg class="bg" viewBox="0 0 1440 62" preserveAspectRatio="none" aria-hidden="true">
        <defs>
          <linearGradient id="base" x1="0" x2="1" y1="0" y2="0"><stop offset="0" stop-color="#003a80"/><stop offset=".05" stop-color="#00336f"/><stop offset=".12" stop-color="#002a60"/><stop offset=".4" stop-color="#002c68"/><stop offset="1" stop-color="#002a66"/></linearGradient>
          <linearGradient id="dark" x1="0" x2="0" y1="0" y2="1"><stop offset="0" stop-color="#001a40" stop-opacity=".1"/><stop offset="1" stop-color="#000a20" stop-opacity=".9"/></linearGradient>
          <linearGradient id="fade" x1="0" x2="1" y1="0" y2="0"><stop offset="0" stop-color="#000a20" stop-opacity="0"/><stop offset=".3" stop-color="#000a20" stop-opacity=".6"/></linearGradient>
          <linearGradient id="ray" x1="0" x2="1" y1="0" y2="0"><stop offset="0" stop-color="#0a4ba8" stop-opacity=".1"/><stop offset=".5" stop-color="#0a56c4"/><stop offset="1" stop-color="#0048a8"/></linearGradient>
        </defs>
        <path d="M0 0h1440v62H0z" fill="url(#base)"/>
        <path d="M120 30h220v32H120z" fill="url(#fade)"/>
        <path d="M340 24h1100v38H340z" fill="url(#dark)"/>
        <path d="M350 28c60 18 130 26 200 28 150 0 260-4 350-18L720 22 500 14z" fill="#00102c" opacity=".75"/>
        ${[0, 1, 2, 3, 4, 5, 6, 7, 8, 9].map((n) => svg`<path d="M${180 + n * 12} ${n * 3}C400 ${n * 3 + 6} 600 ${20 + n * 3} 780 ${34 + n * 2}" stroke="#0b4a9a" stroke-opacity=".6" fill="none"/>`)}
        <path d="M190 0c70 12 160 28 230 62h-95C280 42 240 14 190 0z" fill="url(#ray)" opacity=".6"/>
        <path d="M300 16c60 10 140 30 240 40l60 6H380C360 40 330 26 300 16z" fill="#084aa8" opacity=".8"/>
        <path d="M470 62c160-3 280-10 370-22 90-8 150-40 220-40h180c-90 10-170 26-230 62z" fill="#0a4db0" opacity=".7"/>
        <path d="M1010 36c60-24 110-36 190-36h230c-110 4-170 22-260 24-60 2-110 18-160 26z" fill="#0960cf" opacity=".8"/>
        <path d="M1020 44c50-24 90-34 160-42M1010 56c60-34 110-44 190-50M940 60c60-8 90-30 150-54M340 34c40 4 70 16 110 28M320 22c50 10 100 26 150 40" stroke="#2b7ae6" stroke-opacity=".5" fill="none"/>
        <path d="M1030 52c120-26 260-28 410-30v40h-420z" fill="#001434" opacity=".75"/>
        <path d="M0 60.500h1440" stroke="#003c82" stroke-width="3"/>
      </svg>
      <span class="count">1/4</span>
      <div class="time"><span>00:10</span><span>80:00</span></div>
      <button class="help" aria-label="Help">?</button>
      <button class="pause" aria-label="Pause">${ic(12, 16, svg`<path d="M1 0h4v16H1zM7 0h4v16H7z" fill="#fff"/>`)}</button>
      <div class="set left"><button>Ignore</button><button>End</button></div>
      <div class="set"><button class="tile">Tile</button><button>Undo</button><button>Submit</button></div>
    </div>`;
  }
}

@customElement("app-root")
class AppRoot extends LitElement {
  static styles = css`
    :host { display: flex; flex-direction: column; height: 100vh; overflow: hidden; background: #fff; }
  `;
  render() {
    return html`<xl-titlebar></xl-titlebar><xl-ribbon></xl-ribbon><xl-formula-bar></xl-formula-bar>
      <xl-sheet></xl-sheet><xl-status></xl-status><task-window></task-window><exam-bar></exam-bar>`;
  }
}
